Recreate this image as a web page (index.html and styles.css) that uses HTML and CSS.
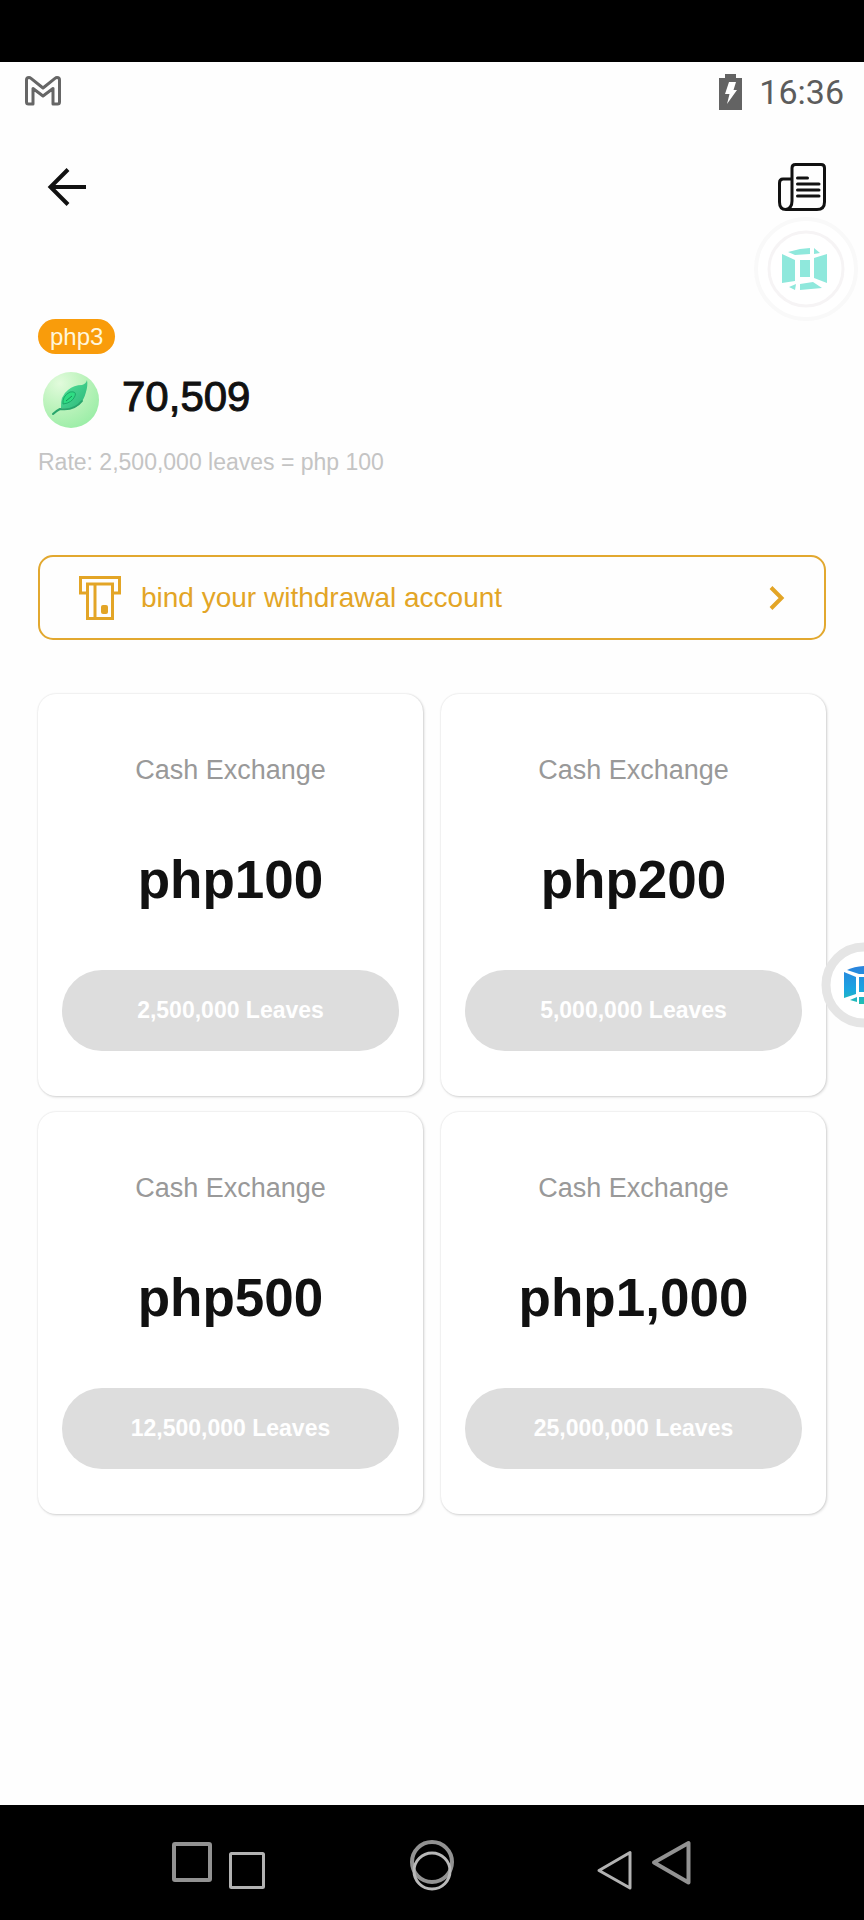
FILE: index.html
```html
<!DOCTYPE html>
<html lang="en">
<head>
<meta charset="utf-8">
<meta name="viewport" content="width=device-width, initial-scale=1">
<title>Cash Exchange</title>
<link rel="stylesheet" href="styles.css">
</head>
<body>
<div class="app">
  <div class="notch"></div>
  <div class="status">
    <svg class="status-mail" width="38" height="32" viewBox="0 0 38 32" fill="none" stroke="#666" stroke-width="3" stroke-linejoin="round"><path d="M2.500 4V26Q2.500 28 4.500 28H9V12.500L19 20L29 12.500V28H33.500Q35.500 28 35.500 26V4Q35.500 1.500 33 1.500Q32 1.500 31 2.300L19 12L7 2.300Q6 1.500 5 1.500Q2.500 1.500 2.500 4Z"/></svg>
    <div class="status-right">
      <svg width="23" height="36" viewBox="0 0 23 36"><path fill="#636363" d="M6 0H17V4H23V36H0V4H6Z"/><path fill="#fff" d="M10 8H17L14.500 16H18L8 30L10.500 20H6Z"/></svg>
      <span class="clock">16:36</span>
    </div>
  </div>

  <header class="toolbar">
    <button class="icon-button" type="button" aria-label="Back">
      <svg width="40" height="40" viewBox="0 0 40 40" fill="none" stroke="#111" stroke-width="4"><path d="M39 20H4M21 2.500L3.500 20L21 37.500"/></svg>
    </button>
    <button class="icon-button" type="button" aria-label="Records">
      <svg width="48" height="48" viewBox="0 0 48 48" fill="none" stroke="#111" stroke-width="3" stroke-linecap="round" stroke-linejoin="round"><path d="M14 16V5Q14 1.500 17.500 1.500H43Q46.500 1.500 46.500 5V39Q46.500 46.500 39 46.500H8Q1.500 46.500 1.500 39V20Q1.500 16 5 16H14V38Q14 45 8 46.500M19.500 15H29.500M19.500 21H41M19.500 27H41M19.500 33H41"/></svg>
    </button>
  </header>

  <main class="content">
    <section class="balance">
      <span class="badge">php3</span>
      <div class="balance-row">
        <svg class="leaf" width="56" height="56" viewBox="0 0 56 56">
          <defs>
            <radialGradient id="disc" cx=".3" cy=".2" r=".9"><stop offset="0" stop-color="#e2fbdc"/><stop offset=".5" stop-color="#bcf3bc"/><stop offset="1" stop-color="#98eda5"/></radialGradient>
            <linearGradient id="blade" x1="0" y1="0" x2="1" y2="1"><stop offset="0" stop-color="#55e59b"/><stop offset="1" stop-color="#2bb579"/></linearGradient>
          </defs>
          <circle cx="28" cy="28" r="28" fill="url(#disc)"/>
          <path d="M44 8Q45 13 43 20Q39 35 28 36Q23 37 18 36Q17 24 25 18Q31 13 39 13Q43 12 44 8Z" fill="url(#blade)"/>
          <path d="M10 42Q13 39 17 37Q31 39 39 29" fill="none" stroke="#28a56c" stroke-width="2" stroke-linecap="round"/>
          <path d="M20 32Q19 24 27 20Q34 19 32 24Q29 31 20 32Z" fill="#2fdc83" stroke="#1ba868" stroke-width="1"/>
          <path d="M23 29L29 24" stroke="#16945b" stroke-width="1" fill="none"/>
        </svg>
        <strong class="amount">70,509</strong>
      </div>
      <p class="rate">Rate: 2,500,000 leaves = php 100</p>
    </section>

    <button class="bind" type="button">
      <svg width="44" height="46" viewBox="0 0 44 46" fill="none" stroke="currentColor" stroke-width="3"><path d="M9 18H2.500V2.500H41.500V18H35M9.500 9H34.500V43.500H9.500ZM17 9V43.500"/><rect x="23" y="30" width="7" height="9" rx="2" fill="currentColor" stroke="none"/></svg>
      <span class="bind-text">bind your withdrawal account</span>
      <svg width="16" height="26" viewBox="0 0 16 26" fill="none" stroke="currentColor" stroke-width="4"><path d="M2 2.500L12.500 13L2 23.500"/></svg>
    </button>

    <section class="cards">
      <article class="card">
        <h2 class="card-title">Cash Exchange</h2>
        <p class="card-value">php100</p>
        <button class="card-button" type="button">2,500,000 Leaves</button>
      </article>
      <article class="card">
        <h2 class="card-title">Cash Exchange</h2>
        <p class="card-value">php200</p>
        <button class="card-button" type="button">5,000,000 Leaves</button>
      </article>
      <article class="card">
        <h2 class="card-title">Cash Exchange</h2>
        <p class="card-value">php500</p>
        <button class="card-button" type="button">12,500,000 Leaves</button>
      </article>
      <article class="card">
        <h2 class="card-title">Cash Exchange</h2>
        <p class="card-value">php1,000</p>
        <button class="card-button" type="button">25,000,000 Leaves</button>
      </article>
    </section>
  </main>

  <nav class="nav">
    <div class="nav-group">
      <button class="icon-button" type="button" aria-label="Recent apps"><svg width="94" height="52" viewBox="0 0 94 52" fill="none"><rect x="2" y="4" width="36" height="36" rx="1" stroke="#929292" stroke-width="4"/><rect x="58.500" y="13.500" width="33" height="34" rx="1" stroke="#b2b2b2" stroke-width="3"/></svg></button>
    </div>
    <div class="nav-group nav-home">
      <button class="icon-button" type="button" aria-label="Home"><svg width="46" height="52" viewBox="0 0 46 52" fill="none"><circle cx="23" cy="22" r="20" stroke="#929292" stroke-width="4"/><circle cx="23" cy="31" r="18" stroke="#b8b8b8" stroke-width="3"/></svg></button>
    </div>
    <div class="nav-group nav-back">
      <button class="icon-button" type="button" aria-label="Go back"><svg width="96" height="52" viewBox="0 0 96 52" fill="none" stroke-linejoin="round"><path d="M34 12.500V48L3 30.500Z" stroke="#b2b2b2" stroke-width="3"/><path d="M92.500 3V42.500L58 22.500Z" stroke="#929292" stroke-width="4"/></svg></button>
    </div>
  </nav>

  <div class="float-ghost" aria-hidden="true">
    <svg width="104" height="104" viewBox="0 0 104 104">
      <circle cx="52" cy="52" r="50" fill="#fff" stroke="#f9f9f9" stroke-width="4"/>
      <circle cx="52" cy="52" r="37" fill="#fff" stroke="#f6f4f5" stroke-width="3"/>
      <g fill="#8fe8dc"><path d="M34 35L46 32L56 31V37L41 38Z"/><path d="M60 31L66 36L60 37Z"/><path d="M28 37L41 43V64L28 66Z"/><path d="M46 43H56V60H46Z"/><path d="M60 41L73 37V66L60 61Z"/><path d="M46 67L59 65L68 71L46 73Z"/><path d="M35 70L42 67L41 73Z"/></g>
    </svg>
  </div>
  <button class="float-tool" type="button" aria-label="Floating tool">
    <svg width="86" height="86" viewBox="0 0 86 86">
      <defs><linearGradient id="cube" gradientUnits="userSpaceOnUse" x1="0" y1="24" x2="0" y2="62"><stop offset="0" stop-color="#2b82dc"/><stop offset=".6" stop-color="#1ba4e2"/><stop offset="1" stop-color="#22bfb0"/></linearGradient></defs>
      <circle cx="43" cy="43" r="38" fill="#fff" stroke="#e5e5e5" stroke-width="9"/>
      <g fill="url(#cube)"><path d="M26 28Q34 24 46 24V32H38Z"/><path d="M23 30L35 35V52L23 56Z"/><path d="M38 35H50V50H38Z"/><path d="M29 58L36 55V60Z"/><path d="M38 55H52V62H38Z"/></g>
    </svg>
  </button>
</div>
</body>
</html>
```

FILE: styles.css
```css
* {
  box-sizing: border-box;
}

body {
  margin: 0;
  background: #fff;
  font-family: "Liberation Sans", Arial, sans-serif;
  color: #111;
}

button {
  border: 0;
  background: none;
  padding: 0;
  font-family: inherit;
  color: inherit;
  cursor: pointer;
}

svg {
  display: block;
  flex: none;
}

h2,
p {
  margin: 0;
}

.app {
  position: relative;
  display: flex;
  flex-direction: column;
  min-height: 100vh;
  overflow: hidden;
  background: #fefefe;
}

.notch {
  height: 62px;
  background: #000;
}

.status {
  display: flex;
  justify-content: space-between;
  align-items: center;
  padding: 10px 20px 10px 24px;
}

.status-right {
  display: flex;
  align-items: center;
  gap: 17px;
}

.clock {
  font-family: Roboto, sans-serif;
  font-size: 34px;
  line-height: 40px;
  color: #5c5c5c;
}

.toolbar {
  display: flex;
  justify-content: space-between;
  align-items: center;
  padding: 41px 38px 0 47px;
}

.content {
  flex: 1;
  padding: 108px 38px 48px;
}

.balance {
  display: flex;
  flex-direction: column;
  align-items: flex-start;
}

.badge {
  padding: 0 12px;
  border-radius: 18px;
  background: #f99c0b;
  color: #fff6dc;
  font-size: 24px;
  line-height: 35px;
}

.balance-row {
  display: flex;
  align-items: flex-start;
  gap: 23px;
  margin-top: 18px;
  padding-left: 5px;
}

.amount {
  font-size: 42px;
  font-weight: 400;
  line-height: 50px;
  -webkit-text-stroke: 1px #111;
}

.rate {
  margin-top: 20px;
  font-size: 23px;
  line-height: 28px;
  color: #c4c4c4;
}

.bind {
  display: flex;
  align-items: center;
  gap: 19px;
  width: 100%;
  margin-top: 79px;
  padding: 18px 39px 17px 38px;
  border: 2px solid #e2a82f;
  border-radius: 15px;
  color: #e3a526;
  font-size: 28px;
  line-height: 44px;
  text-align: left;
}

.bind-text {
  flex: 1;
}

.cards {
  display: grid;
  grid-template-columns: 1fr 1fr;
  gap: 16px 18px;
  margin-top: 54px;
}

.card {
  display: flex;
  flex-direction: column;
  padding: 60px 24px 45px;
  border-radius: 18px;
  background: #fff;
  box-shadow: 0 0 2px rgba(0, 0, 0, 0.12), 1px 1px 3px rgba(0, 0, 0, 0.16);
  text-align: center;
}

.card-title {
  font-size: 27px;
  font-weight: 400;
  line-height: 32px;
  color: #999;
}

.card-value {
  margin-top: 64px;
  font-size: 53px;
  font-weight: 700;
  line-height: 60px;
}

.card-button {
  margin-top: 60px;
  padding: 24px 0;
  border-radius: 40px;
  background: #ddd;
  color: #fff;
  font-size: 23px;
  font-weight: 700;
  line-height: 33px;
}

.nav {
  display: grid;
  grid-template-columns: 1fr 1fr 1fr;
  padding: 35px 172px 28px;
  background: #000;
}

.nav-group {
  display: flex;
}

.nav-home {
  justify-content: center;
}

.nav-back {
  justify-content: flex-end;
}

.float-ghost {
  position: absolute;
  top: 217px;
  right: 6px;
}

.float-tool {
  position: absolute;
  top: 942px;
  right: -43px;
}
```
